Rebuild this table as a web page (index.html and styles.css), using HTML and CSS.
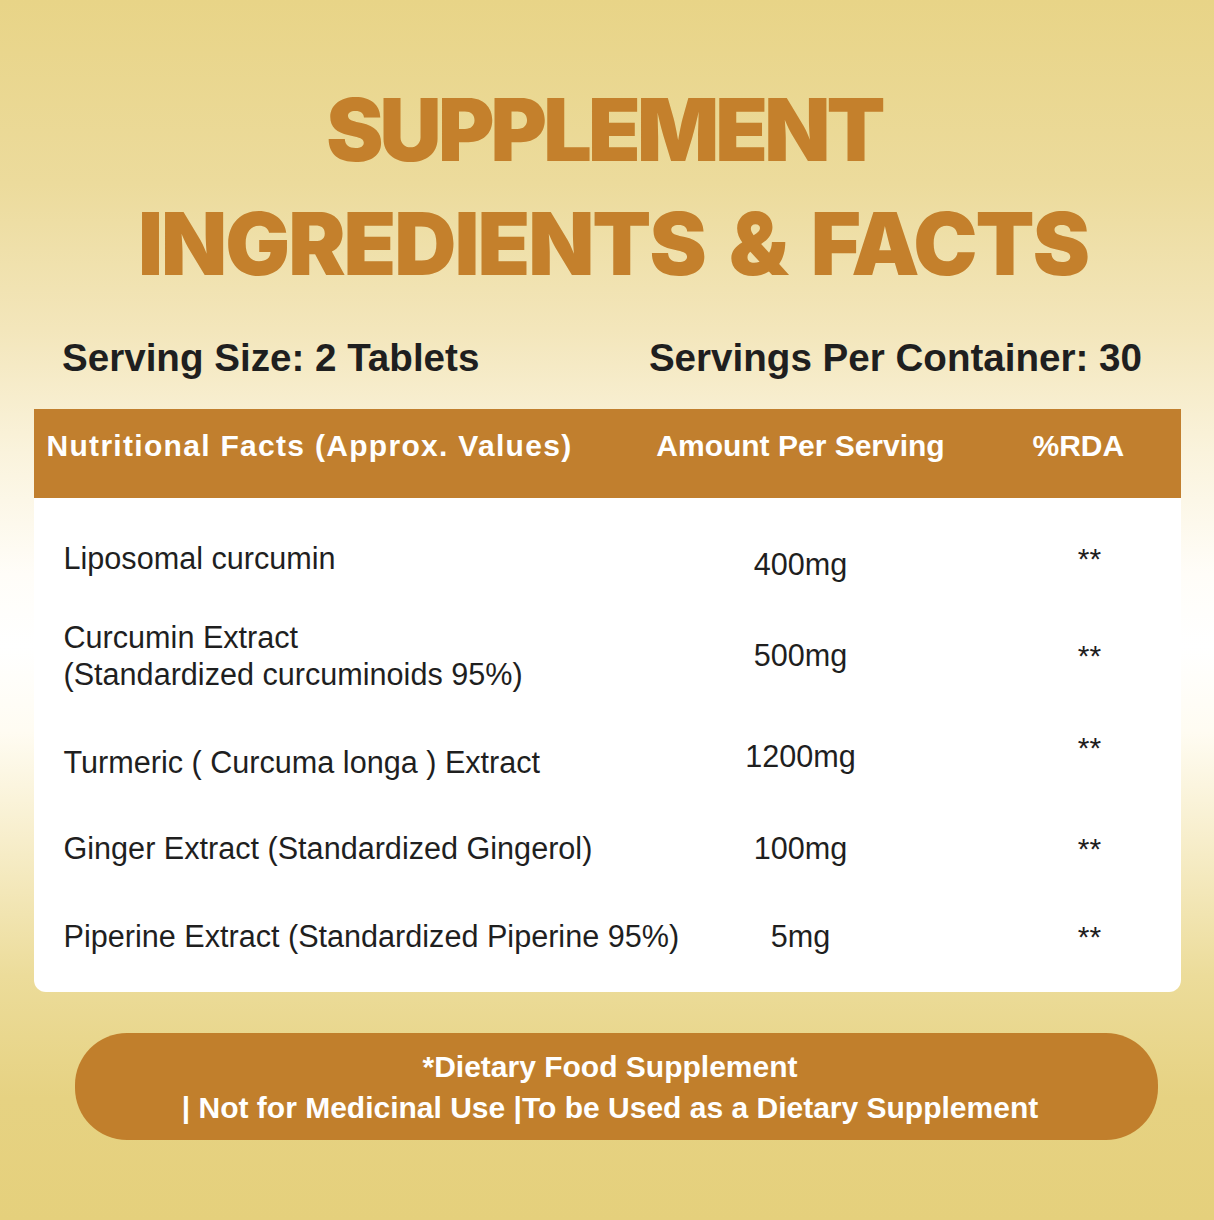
FILE: index.html
```html
<!DOCTYPE html>
<html lang="en">
<head>
<meta charset="utf-8">
<title>Supplement Ingredients &amp; Facts</title>
<link rel="stylesheet" href="styles.css">
</head>
<body>
<main class="page">
  <h1 class="title">
    <span class="title-line title-top">SUPPLEMENT</span>
    <span class="title-line title-bottom">INGREDIENTS &amp; FACTS</span>
  </h1>

  <div class="serving">
    <span class="serving-size">Serving Size: 2 Tablets</span>
    <span class="serving-count">Servings Per Container: 30</span>
  </div>

  <section class="facts">
    <div class="facts-head">
      <span class="col-name">Nutritional Facts (Approx. Values)</span>
      <span class="col-amount">Amount Per Serving</span>
      <span class="col-rda">%RDA</span>
    </div>
    <div class="facts-body">
      <div class="row row-first">
        <span class="col-name">Liposomal curcumin</span>
        <span class="col-amount">400mg</span>
        <span class="col-rda">**</span>
      </div>
      <div class="row">
        <span class="col-name">Curcumin Extract<br>(Standardized curcuminoids 95%)</span>
        <span class="col-amount">500mg</span>
        <span class="col-rda">**</span>
      </div>
      <div class="row row-raised">
        <span class="col-name">Turmeric ( Curcuma longa ) Extract</span>
        <span class="col-amount">1200mg</span>
        <span class="col-rda">**</span>
      </div>
      <div class="row">
        <span class="col-name">Ginger Extract (Standardized Gingerol)</span>
        <span class="col-amount">100mg</span>
        <span class="col-rda">**</span>
      </div>
      <div class="row">
        <span class="col-name">Piperine Extract (Standardized Piperine 95%)</span>
        <span class="col-amount">5mg</span>
        <span class="col-rda">**</span>
      </div>
    </div>
  </section>

  <div class="note">
    <span class="note-line">*Dietary Food Supplement</span>
    <span class="note-line">| Not for Medicinal Use |To be Used as a Dietary Supplement</span>
  </div>
</main>
</body>
</html>
```

FILE: styles.css
```css
* { box-sizing: border-box; margin: 0; padding: 0; }

html, body {
  width: 1214px;
  height: 1220px;
  overflow: hidden;
}

body {
  font-family: "Liberation Sans", Arial, sans-serif;
  background: linear-gradient(to bottom,
    #e8d487 0%,
    #ecdb9c 15%,
    #f3e6bb 27%,
    #faf3dc 37%,
    #fffdf8 47%,
    #ffffff 53%,
    #fffcf2 60%,
    #f6ecc6 70%,
    #ecdc9a 80%,
    #e6d282 90%,
    #e5d07c 100%);
}

.page {
  display: flex;
  flex-direction: column;
  align-items: center;
  padding-top: 73px;
}

.title {
  display: flex;
  flex-direction: column;
  align-items: center;
  font-family: Inter, "Open Sans", sans-serif;
  font-weight: 900;
  font-size: 86px;
  line-height: 114px;
  color: #c4802c;
}

.title-top { letter-spacing: -3.8px; margin-left: -6px; }
.title-bottom { letter-spacing: -2px; word-spacing: 9px; margin-left: 12px; }

.serving {
  width: 100%;
  height: 108px;
  display: flex;
  justify-content: space-between;
  padding: 35px 72px 0 62px;
  font-weight: 700;
  font-size: 38.6px;
  line-height: 44px;
  color: #1f1f1f;
}

.facts {
  width: 1147px;
  background: #ffffff;
  border-radius: 0 0 12px 12px;
}

.facts-head,
.row {
  display: grid;
  grid-template-columns: 640px 254px 253px;
  align-items: center;
}

.col-amount { text-align: center; white-space: nowrap; }
.col-rda { text-align: center; white-space: nowrap; }

.facts-head {
  height: 89px;
  padding-bottom: 16px;
  background: #c17f2e;
  color: #ffffff;
  font-weight: 700;
  font-size: 30px;
}

.facts-head .col-name { padding-left: 13px; letter-spacing: 1.3px; }
.facts-head .col-amount { margin: 0 -24px; }
.facts-head .col-rda { text-align: left; padding-left: 105px; }

.facts-body {
  display: grid;
  grid-template-rows: 90px 105px 108px 64px 112px;
  padding-top: 15px;
  font-size: 30.6px;
  line-height: 37px;
  color: #1f1f1f;
}

.row .col-name { padding-left: 30px; white-space: nowrap; }
.row .col-rda { padding-left: 71px; font-size: 30px; }

.row-first .col-amount { padding-top: 12px; }
.row-raised .col-amount { padding-bottom: 12px; }
.row-raised .col-rda { padding-bottom: 30px; }

.note {
  margin-top: 41px;
  margin-left: 18px;
  width: 1083px;
  height: 107px;
  padding-right: 12px;
  border-radius: 52px;
  background: #c17f2c;
  color: #ffffff;
  display: flex;
  flex-direction: column;
  align-items: center;
  justify-content: center;
  font-weight: 700;
  font-size: 30px;
  line-height: 41px;
}
```
